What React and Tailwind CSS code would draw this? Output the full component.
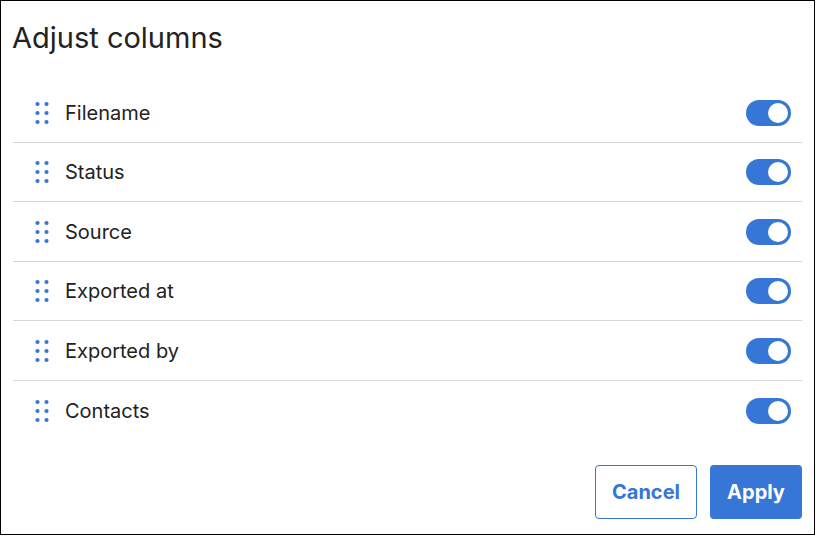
import React from "react";

const rows = ["Filename", "Status", "Source", "Exported at", "Exported by", "Contacts"];

function Dots() {
  return (
    <svg width="14" height="24" viewBox="0 0 14 24" className="shrink-0">
      {[3, 12, 21].map((y) =>
        [2.5, 11.5].map((x) => <circle key={`${x}-${y}`} cx={x} cy={y} r="2.1" fill="#3576d6" />)
      )}
    </svg>
  );
}

function Toggle() {
  return (
    <div className="w-[45px] h-[26px] rounded-full bg-[#3576d6] flex items-center justify-end pr-[3px]">
      <div className="w-[20px] h-[20px] rounded-full bg-white" />
    </div>
  );
}

export default function App() {
  return (
    <div
      className="w-[815px] h-[535px] border border-black bg-white flex flex-col"
      style={{ fontFamily: "Inter, 'Noto Sans', sans-serif" }}
    >
      <h1 className="text-[29px] leading-none text-[#222] pl-[11px] pt-[22px]">Adjust columns</h1>
      <div className="mt-[31px] pl-[12px] pr-[12px] flex flex-col">
        {rows.map((r, i) => (
          <div
            key={r}
            className={`h-[59.5px] flex items-center pt-[1px] ${i < rows.length - 1 ? "border-b border-[#d6d6d6]" : ""}`}
          >
            <div className="pl-[22px] w-[52px]">
              <Dots />
            </div>
            <span className="text-[20px] text-[#222] flex-1">{r}</span>
            <div className="pr-[11px]">
              <Toggle />
            </div>
          </div>
        ))}
      </div>
      <div className="flex justify-end gap-[13px] pr-[12px] mt-[25px]">
        <button className="w-[102px] h-[54px] rounded-[4px] border border-[#3576d6] text-[#3576d6] text-[20px] font-bold">
          Cancel
        </button>
        <button className="w-[92px] h-[54px] rounded-[4px] bg-[#3576d6] text-white text-[20px] font-bold">
          Apply
        </button>
      </div>
    </div>
  );
}
